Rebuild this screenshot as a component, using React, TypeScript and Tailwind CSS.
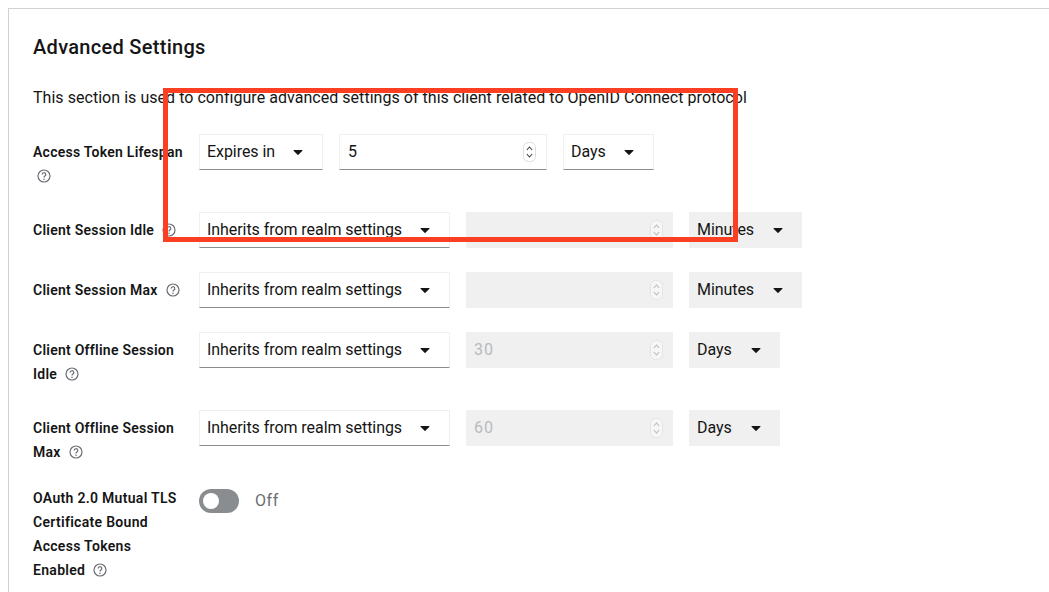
import React from 'react';

const bodyFont = "font-['Roboto','Liberation_Sans',sans-serif]";

const Help = () => (
  <svg viewBox="0 0 14 14" className="inline-block h-[14px] w-[14px] text-[#6a6e73]" fill="none">
    <circle cx="7" cy="7" r="6" stroke="currentColor" strokeWidth="1.2" />
    <path d="M5.2 5.6a1.8 1.8 0 1 1 2.7 1.5c-.6.4-.9.7-.9 1.3" stroke="currentColor" strokeWidth="1.2" />
    <circle cx="7" cy="10.2" r=".8" fill="currentColor" />
  </svg>
);

const Caret = () => (
  <svg viewBox="0 0 11 6" className="h-[5px] w-[10px] shrink-0 text-[#151515]" fill="currentColor">
    <path d="M.6 0h9.8c.5 0 .8.6.4 1L6 5.7a.7.7 0 0 1-1 0L.2 1C-.2.6.1 0 .6 0z" />
  </svg>
);

const Spinner = ({ disabled }: { disabled?: boolean }) => (
  <svg viewBox="0 0 13 20" className="h-5 w-[13px] shrink-0" fill="none">
    <rect x=".5" y=".5" width="12" height="19" rx="5" fill={disabled ? '#f6f6f6' : '#fff'} stroke={disabled ? '#e4e4e4' : '#dcdcdc'} />
    <path d="M3.8 8 6.5 5l2.7 3M3.8 12l2.7 3 2.7-3" stroke={disabled ? '#b8bbbe' : '#3c3f42'} strokeWidth="1.1" />
  </svg>
);

type SelectProps = { value: string; width: string; disabled?: boolean };

const Select = ({ value, width, disabled }: SelectProps) => (
  <div
    className={`flex h-9 items-center justify-between pr-[19px] text-base tracking-[-0.06px] text-[#151515] ${width} ${
      disabled ? 'bg-[#f0f0f0] pl-2' : 'border border-[#f0f0f0] border-b-[#8a8d90] pl-[7px]'
    }`}
  >
    <span>{value}</span>
    <Caret />
  </div>
);

const NumberInput = ({ value, width, disabled }: { value?: string; width: string; disabled?: boolean }) => (
  <div
    className={`flex h-9 items-center justify-between pl-2 pr-[10px] text-base tracking-[1px] ${width} ${
      disabled ? 'bg-[#f0f0f0] text-[#b8bbbe]' : 'border border-[#f0f0f0] border-b-[#8a8d90] text-[#151515]'
    }`}
  >
    <span>{value}</span>
    <Spinner disabled={disabled} />
  </div>
);

type Row = {
  label: string[];
  mode: string;
  active?: boolean;
  amount?: string;
  unit: string;
};

const rows: Row[] = [
  { label: ['Access Token Lifespan', ''], mode: 'Expires in', active: true, amount: '5', unit: 'Days' },
  { label: ['Client Session Idle'], mode: 'Inherits from realm settings', unit: 'Minutes' },
  { label: ['Client Session Max'], mode: 'Inherits from realm settings', unit: 'Minutes' },
  { label: ['Client Offline Session', 'Idle'], mode: 'Inherits from realm settings', amount: '30', unit: 'Days' },
  { label: ['Client Offline Session', 'Max'], mode: 'Inherits from realm settings', amount: '60', unit: 'Days' },
];

const Label = ({ lines }: { lines: string[] }) => (
  <div className="w-[150px] shrink-0 pt-[6px] text-sm font-semibold leading-6 tracking-[0.25px] text-[#151515]">
    {lines.map((line, i) => (
      <div key={i} className="flex h-6 items-center gap-2 whitespace-nowrap">
        {line && <span>{line}</span>}
        {i === lines.length - 1 && (
          <span className={`flex ${line ? '' : 'pl-[4px]'}`}>
            <Help />
          </span>
        )}
      </div>
    ))}
  </div>
);

export default function App() {
  return (
    <div className={`relative h-[592px] w-[1049px] overflow-hidden bg-white pl-2 pt-2 ${bodyFont}`}>
      <div className="h-full border-l border-t border-[#d2d2d2] pl-6 pt-[23px]">
        <h2 className="text-xl font-medium leading-[30px] tracking-[0.3px] text-[#151515]">Advanced Settings</h2>
        <p className="mt-6 text-base leading-6 tracking-[0.04px] text-[#151515]">
          This section is used to configure advanced settings of this client related to OpenID Connect protocol
        </p>
        <div className="mt-6 flex flex-col gap-6">
          {rows.map(row => {
            const days = row.unit === 'Days';
            return (
              <div key={row.label.join(' ')} className="flex gap-4">
                <Label lines={row.label} />
                <div className="flex gap-4">
                  <Select value={row.mode} width={row.active ? 'w-[124px]' : 'w-[251px]'} />
                  <NumberInput value={row.amount} width={row.active ? 'w-[208px]' : 'w-[207px]'} disabled={!row.active} />
                  <Select value={row.unit} width={days ? 'w-[91px]' : 'w-[113px]'} disabled={!row.active} />
                </div>
              </div>
            );
          })}
          <div className="flex gap-4">
            <div className="-mt-[2px] w-[150px] shrink-0 text-sm font-semibold leading-6 tracking-[0.3px] text-[#151515]">
              <div className="whitespace-nowrap">OAuth 2.0 Mutual TLS</div>
              <div className="whitespace-nowrap">Certificate Bound</div>
              <div className="whitespace-nowrap">Access Tokens</div>
              <div className="flex items-center gap-2">
                <span>Enabled</span>
                <Help />
              </div>
            </div>
            <div className="mt-px flex h-6 items-center gap-4">
              <div className="flex h-6 w-10 items-center rounded-full bg-[#8a8d90] pl-1">
                <div className="h-4 w-4 rounded-full bg-white" />
              </div>
              <span className="text-base tracking-[0.6px] text-[#6a6e73]">Off</span>
            </div>
          </div>
        </div>
      </div>
      <div className="absolute left-[163px] top-[88px] h-[154px] w-[575px] border-[5px] border-[#fb3f23]" />
    </div>
  );
}
